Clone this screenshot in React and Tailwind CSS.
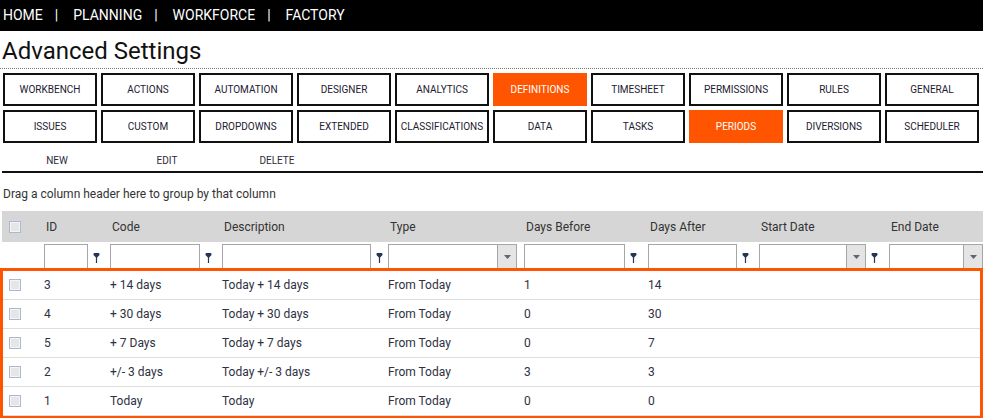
import React from 'react';

const navItems = ['HOME', 'PLANNING', 'WORKFORCE', 'FACTORY'];

const tabRows = [
  ['WORKBENCH', 'ACTIONS', 'AUTOMATION', 'DESIGNER', 'ANALYTICS', 'DEFINITIONS', 'TIMESHEET', 'PERMISSIONS', 'RULES', 'GENERAL'],
  ['ISSUES', 'CUSTOM', 'DROPDOWNS', 'EXTENDED', 'CLASSIFICATIONS', 'DATA', 'TASKS', 'PERIODS', 'DIVERSIONS', 'SCHEDULER'],
];
const activeTabs = ['DEFINITIONS', 'PERIODS'];

const columns = ['ID', 'Code', 'Description', 'Type', 'Days Before', 'Days After', 'Start Date', 'End Date'];

// input width + kind for each filter cell
const filters = [
  { w: 'w-[44px]', kind: 'text' },
  { w: 'w-[90px]', kind: 'text' },
  { w: 'w-[149px]', kind: 'text' },
  { w: 'w-[129px]', kind: 'select', noIcon: true },
  { w: 'w-[101px]', kind: 'text' },
  { w: 'w-[89px]', kind: 'text' },
  { w: 'w-[107px]', kind: 'select' },
  { w: 'w-[94px]', kind: 'select', noIcon: true },
];

const rows = [
  ['3', '+ 14 days', 'Today + 14 days', 'From Today', '1', '14'],
  ['4', '+ 30 days', 'Today + 30 days', 'From Today', '0', '30'],
  ['5', '+ 7 Days', 'Today + 7 days', 'From Today', '0', '7'],
  ['2', '+/- 3 days', 'Today +/- 3 days', 'From Today', '3', '3'],
  ['1', 'Today', 'Today', 'From Today', '0', '0'],
];

const headGrid = 'grid grid-cols-[42px_66px_112px_166px_136px_124px_111px_130px_1fr]';
const bodyGrid = 'grid grid-cols-[41px_66px_112px_166px_136px_124px_111px_130px_1fr]';

function FilterIcon() {
  return (
    <svg width="7" height="10" viewBox="0 0 7 10" className="shrink-0">
      <path d="M0.5 1.2C0.5 0.5 1 0 1.8 0h3.4C6 0 6.5 0.5 6.5 1.2V2L4.1 4.6V10H2.9V4.6L0.5 2Z" fill="#263652" />
    </svg>
  );
}

function Check() {
  return <div className="w-[12px] h-[12px] border border-[#a9b9d3] bg-[#e6e6e6] shadow-[inset_0_0_0_1px_#f4f4f4]" />;
}

function FilterCell({ f }) {
  return (
    <div className="flex items-start">
      {f.kind === 'text' ? (
        <div className={`${f.w} h-[26px] mt-[2px] border border-[#a6a6a6] bg-white`} />
      ) : (
        <div className={`${f.w} h-[26px] mt-[2px] border border-[#a6a6a6] bg-white flex justify-end`}>
          <div className="w-[19px] h-full bg-[#e4e4e4] border-l border-[#a6a6a6] flex items-center justify-center">
            <svg width="7" height="4" viewBox="0 0 7 4"><path d="M0 0h7L3.5 4Z" fill="#5b6478" /></svg>
          </div>
        </div>
      )}
      {!f.noIcon && (
        <div className="pl-[5px] pt-[11px]">
          <FilterIcon />
        </div>
      )}
    </div>
  );
}

export default function App() {
  return (
    <div className="w-[983px] h-[418px] overflow-hidden bg-white font-['Roboto',sans-serif] text-[#2b2d3a]">
      {/* top nav */}
      <div className="h-[31px] bg-black flex items-center pl-[3px] text-white text-[14px]">
        {navItems.map((n, i) => (
          <React.Fragment key={n}>
            {i > 0 && <span className="ml-[12px] mr-[15px]">|</span>}
            <span>{n}</span>
          </React.Fragment>
        ))}
      </div>

      <h1 className="pl-[2px] pt-[4px] h-[37px] text-[24px] leading-[32px] text-[#111]">Advanced Settings</h1>
      <div className="border-t border-dotted border-[#7a7a7a]" />

      {/* tabs */}
      <div className="pl-[3px] pt-[4px] w-[979px] flex flex-col gap-[4px]">
        {tabRows.map((r, ri) => (
          <div key={ri} className="grid grid-cols-10 gap-x-[4px]">
            {r.map((t) => {
              const on = activeTabs.includes(t);
              return (
                <div
                  key={t}
                  className={`h-[33px] flex items-center justify-center text-[10px] ${
                    on ? 'bg-[#ff5500] text-white border-2 border-[#ff5500]' : 'border-2 border-[#111] text-[#1c2030]'
                  }`}
                >
                  {t}
                </div>
              );
            })}
          </div>
        ))}
      </div>

      {/* toolbar */}
      <div className="ml-[2px] mt-[6px] h-[24px] flex items-center text-[10px] text-[#2b2d3a] border-b-2 border-[#111]">
        {['NEW', 'EDIT', 'DELETE'].map((b) => (
          <div key={b} className="w-[110px] text-center">{b}</div>
        ))}
      </div>

      <div className="pl-[3px] pt-[12px] h-[38px] text-[12px] text-[#333]">Drag a column header here to group by that column</div>

      {/* grid header */}
      <div className={`${headGrid} ml-[2px] h-[31px] bg-[#d6d6d6] items-center text-[12px] text-[#333]`}>
        <div className="pl-[7px]"><Check /></div>
        {columns.map((c) => (
          <div key={c} className="pl-[2px]">{c}</div>
        ))}
      </div>

      {/* filter row */}
      <div className={`${headGrid} ml-[2px] h-[26px]`}>
        <div />
        {filters.map((f, i) => (
          <FilterCell key={i} f={f} />
        ))}
      </div>

      {/* rows */}
      <div className="relative border-[3px] border-[#ff5500] bg-white text-[12px] text-[#2e3142]">
        {rows.map((r, i) => (
          <div key={i} className={`${bodyGrid} h-[29px] items-center border-b border-[#dedede]`}>
            <div className="pl-[6px]"><Check /></div>
            {r.map((v, j) => (
              <div key={j}>{v}</div>
            ))}
            <div /><div />
          </div>
        ))}
      </div>
    </div>
  );
}
